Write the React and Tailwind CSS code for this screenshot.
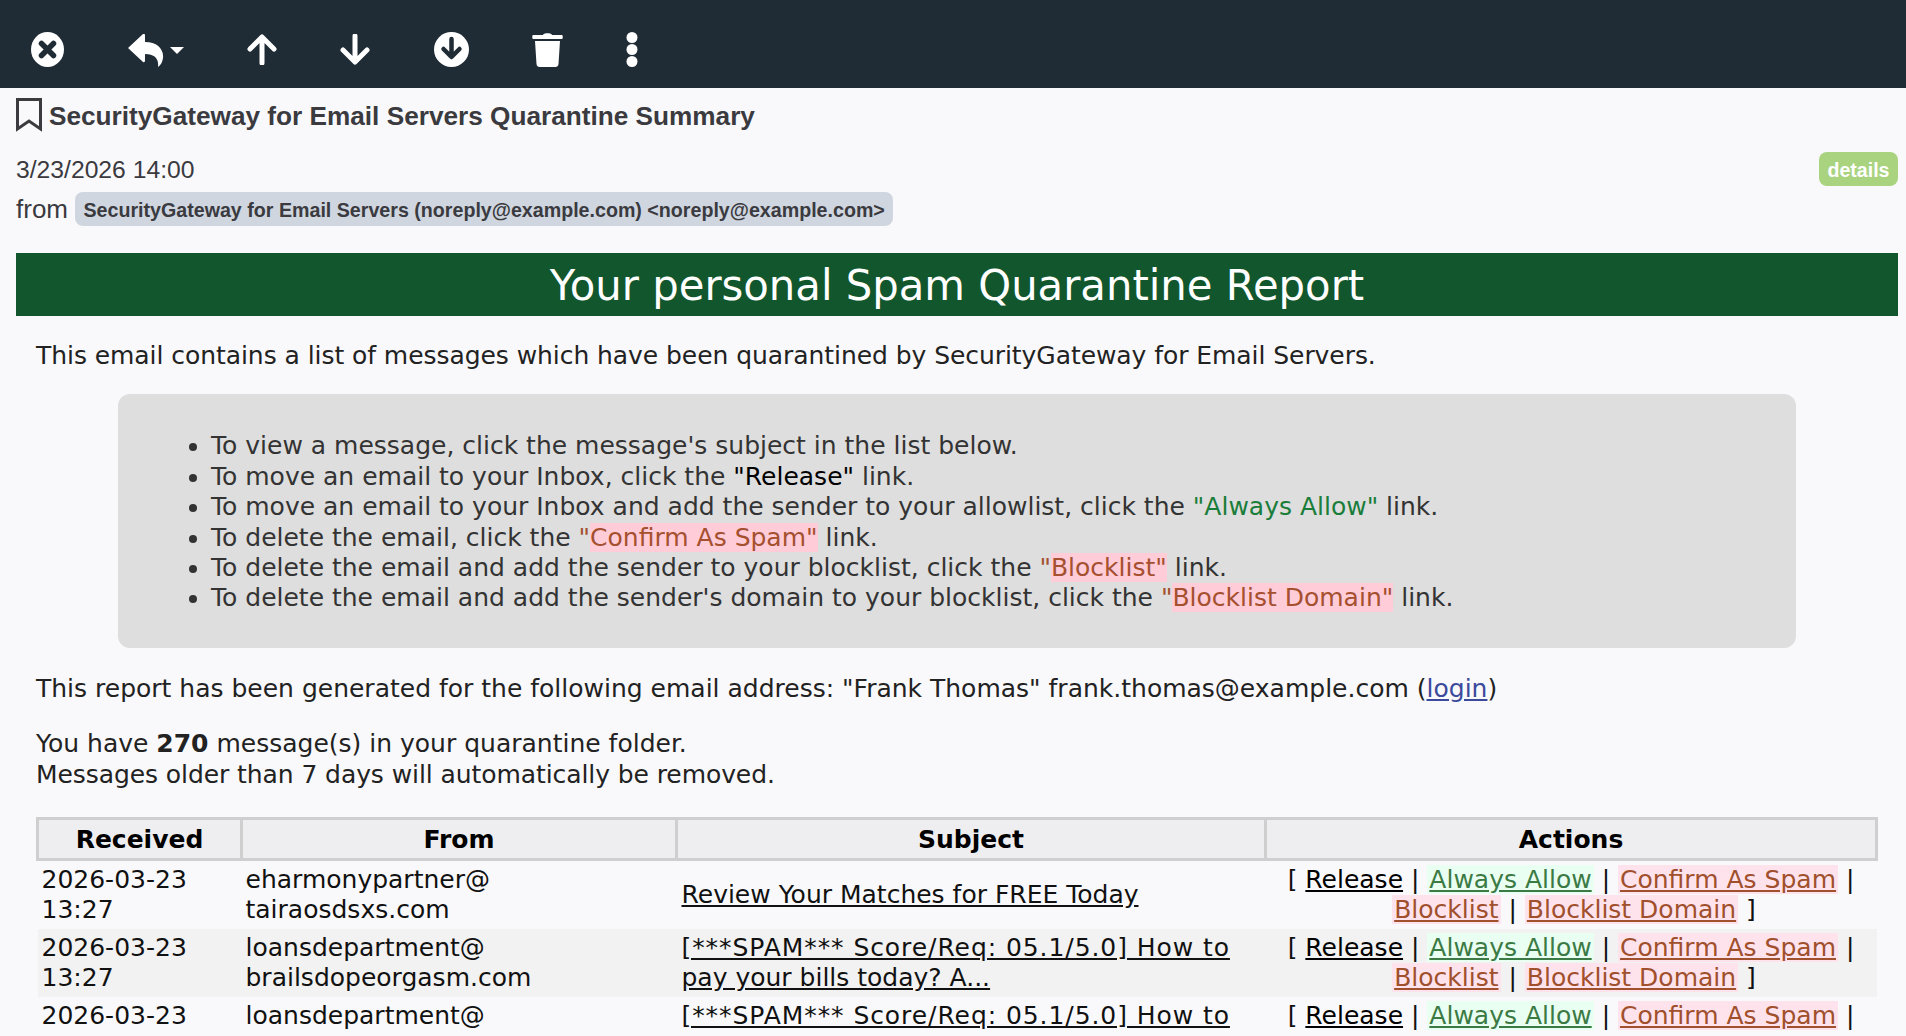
import React from "react";

// the third row runs off the bottom of the window, only its first line shows
const rows = [
  { date: "2026-03-23", time: "13:27", user: "eharmonypartner@", host: "tairaosdsxs.com", rest: "Review Your Matches for FREE Today" },
  { date: "2026-03-23", time: "13:27", user: "loansdepartment@", host: "brailsdopeorgasm.com", prefix: "[***SPAM*** Score/Req: 05.1/5.0] How to", rest: " pay your bills today? A...", shade: true },
  { date: "2026-03-23", user: "loansdepartment@", prefix: "[***SPAM*** Score/Req: 05.1/5.0] How to", cut: true },
];

const Green = ({ children }) => <span className="text-[#1a7d3a]">{children}</span>;
const Red = ({ children }) => (
  <span className="text-[#a5502f]">"<span className="bg-[#ffccd8]">{children}"</span></span>
);
const Sep = () => <span> | </span>;
const GreenLink = ({ children }) => <a className="text-[#3c7a45] bg-[#e9fff1] underline px-[2px]">{children}</a>;
const RedLink = ({ children, className }) => <a className={`text-[#a0502c] bg-[#ffe3ec] underline px-[2px] ${className || ""}`}>{children}</a>;

const App = () => {
  return (
    <div className="h-screen overflow-hidden bg-[#f9f9fb] text-[#333] font-['Liberation_Sans',sans-serif]">
      <div className="h-[88px] bg-[#1f2b35] flex items-start pt-[32px] pl-[31px] text-white">
        <svg width="33" height="35" viewBox="0 0 33 35">
          <ellipse cx="16.5" cy="17.5" rx="16.5" ry="17.5" fill="#fff" />
          <path d="M10.5 11.5 L22.5 23.5 M22.5 11.5 L10.5 23.5" stroke="#1f2b35" strokeWidth="5.5" strokeLinecap="round" />
        </svg>
        <svg width="56" height="33" viewBox="0 0 56 33" className="ml-[64px] mt-[2px]">
          <path d="M0 14 L15 0 C16 -0.5 17 0 17 1 V8 C29 8 36 15 35 24 C34.5 28 33 31 30 33 C31 25 27 20 17 20 V27 C17 28 16 28.5 15 28 Z" fill="#fff" />
          <path d="M42 13 H56 L49 20 Z" fill="#fff" />
        </svg>
        <svg width="30" height="31" viewBox="0 0 30 31" className="ml-[63px] mt-[2px]">
          <path d="M15 29 V4 M3 15 L15 3 L27 15" stroke="#fff" strokeWidth="5" fill="none" strokeLinecap="round" strokeLinejoin="round" />
        </svg>
        <svg width="30" height="31" viewBox="0 0 30 31" className="ml-[63px] mt-[2px]">
          <path d="M15 2 V27 M3 16 L15 28 L27 16" stroke="#fff" strokeWidth="5" fill="none" strokeLinecap="round" strokeLinejoin="round" />
        </svg>
        <svg width="35" height="35" viewBox="0 0 35 35" className="ml-[64px]">
          <ellipse cx="17.5" cy="17.5" rx="17.5" ry="17.5" fill="#fff" />
          <path d="M17.5 7 V24 M9.5 17 L17.5 25 L25.5 17" stroke="#1f2b35" strokeWidth="4.5" fill="none" strokeLinecap="round" strokeLinejoin="round" />
        </svg>
        <svg width="31" height="35" viewBox="0 0 31 35" className="ml-[63px]">
          <path d="M11 3 C11 0.5 20 0.5 20 3 L30 3 C31 3 31 7 30 7 L1 7 C0 7 0 3 1 3 Z" fill="#fff" />
          <path d="M3 9 H28 L26.5 32 C26.4 34 25 35 23.5 35 H7.5 C6 35 4.6 34 4.5 32 Z" fill="#fff" />
        </svg>
        <svg width="12" height="35" viewBox="0 0 12 35" className="ml-[63px]">
          <circle cx="6" cy="5.5" r="5.5" fill="#fff" />
          <circle cx="6" cy="17.5" r="5.5" fill="#fff" />
          <circle cx="6" cy="29.5" r="5.5" fill="#fff" />
        </svg>
      </div>

      <div className="pl-[16px] pr-[8px]">
        <div className="flex items-center h-[58px] gap-[7px] text-[#3a3a3f]">
          <svg width="26" height="34" viewBox="0 0 26 34" className="-mt-[4px]">
            <path d="M1.5 1.5 H24.5 V31 L13 23 L1.5 31 Z" fill="none" stroke="#3a3a3f" strokeWidth="3" />
          </svg>
          <h1 className="text-[26.2px] font-bold">SecurityGateway for Email Servers Quarantine Summary</h1>
        </div>
        <div className="flex justify-between items-center mt-[6px]">
          <span className="text-[24.7px] leading-[36px] -mb-[2px] text-[#3a3a3f]">3/23/2026 14:00</span>
          <span className="bg-[#a9d37f] text-white font-bold text-[19.6px] px-[8.5px] h-[34px] leading-[36px] rounded-[8px]">details</span>
        </div>
        <div className="flex items-center gap-[7px] mt-[6px]">
          <span className="text-[26px] leading-[34px] text-[#3a3a3f]">from</span>
          <span className="bg-[#cfd6df] font-bold text-[19.65px] h-[34px] leading-[36px] px-[8.5px] rounded-[8px] text-[#3a3a3f]">SecurityGateway for Email Servers (noreply@example.com) &lt;noreply@example.com&gt;</span>
        </div>

        <div className="font-['DejaVu_Sans',sans-serif] text-[#222] text-[25px] leading-[30.4px]">
          <div className="mt-[27px] h-[63px] bg-[#12562d] text-white text-center text-[41.75px] leading-[66px]">Your personal Spam Quarantine Report</div>
          <div className="px-[20px]">
            <p className="mt-[25px] tracking-[-0.06px]">This email contains a list of messages which have been quarantined by SecurityGateway for Email Servers.</p>
            <div className="mt-[23px] mx-[82px] bg-[#dedede] rounded-[12px] pt-[37px] pb-[34px] pl-[93px] text-[#333]">
              <ul className="list-disc">
                <li>To view a message, click the message's subject in the list below.</li>
                <li>To move an email to your Inbox, click the <span className="text-black">"Release"</span> link.</li>
                <li>To move an email to your Inbox and add the sender to your allowlist, click the <Green>"Always Allow"</Green> link.</li>
                <li>To delete the email, click the <Red>Confirm As Spam</Red> link.</li>
                <li>To delete the email and add the sender to your blocklist, click the <Red>Blocklist</Red> link.</li>
                <li>To delete the email and add the sender's domain to your blocklist, click the <Red>Blocklist Domain</Red> link.</li>
              </ul>
            </div>
            <p className="mt-[26px]">This report has been generated for the following email address: "Frank Thomas" frank.thomas@example.com (<a className="text-[#3b4a9c] underline">login</a>)</p>
            <p className="mt-[25px]">You have <b>270</b> message(s) in your quarantine folder.<br /><span className="tracking-[-0.08px]">Messages older than 7 days will automatically be removed.</span></p>

            <table className="mt-[27px] w-full table-fixed border-collapse text-[#111]">
              <colgroup>
                <col className="w-[204px]" />
                <col className="w-[435px]" />
                <col className="w-[589px]" />
                <col />
              </colgroup>
              <thead>
                <tr className="bg-[#eeeef0] text-black">
                  <th className="border-[3px] border-[#cfcfcf] h-[41px] pt-[2px] font-bold">Received</th>
                  <th className="border-[3px] border-[#cfcfcf] pt-[2px] font-bold">From</th>
                  <th className="border-[3px] border-[#cfcfcf] pt-[2px] font-bold">Subject</th>
                  <th className="border-[3px] border-[#cfcfcf] pt-[2px] font-bold">Actions</th>
                </tr>
              </thead>
              <tbody>
                {rows.map((r, i) => (
                  <tr key={i} className={r.shade ? "bg-[#f2f2f2]" : ""}>
                    <td className="px-[4px] py-[3.6px]">{r.date}{!r.cut && <><br />{r.time}</>}</td>
                    <td className="px-[4px] py-[3.6px]">{r.user}{!r.cut && <><br />{r.host}</>}</td>
                    <td className="pl-[5px] pr-[4px] py-[3.6px]">
                      <a className="underline"><span className="tracking-[0.93px]">{r.prefix}</span>{r.rest}</a>
                    </td>
                    <td className="px-[4px] py-[3.6px] text-center">
                      [ <a className="underline text-black">Release</a><Sep /><GreenLink>Always Allow</GreenLink><Sep /><RedLink>Confirm As Spam</RedLink><Sep />
                      {!r.cut && (
                        <>
                          <br />
                          <RedLink className="ml-[6px]">Blocklist</RedLink><Sep /><RedLink>Blocklist Domain</RedLink> ]
                        </>
                      )}
                    </td>
                  </tr>
                ))}
              </tbody>
            </table>
          </div>
        </div>
      </div>
    </div>
  );
};

export default App;
